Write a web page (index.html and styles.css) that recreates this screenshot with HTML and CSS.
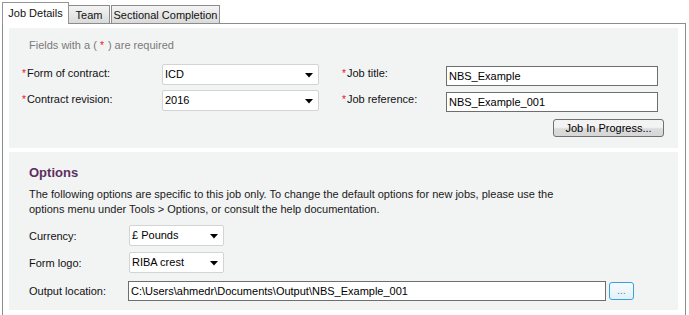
FILE: index.html
```html
<!DOCTYPE html>
<html lang="en">
<head>
  <meta charset="UTF-8">
  <title>Job Details</title>
  <link rel="stylesheet" href="styles.css">
</head>
<body>
  <div class="window">
    <div class="tabs">
      <div class="tab active">Job Details</div>
      <div class="tab team">Team</div>
      <div class="tab sectional">Sectional Completion</div>
    </div>

    <div class="panel">
      <div class="section details">
        <p class="note">Fields with a ( <span class="req">*</span> ) are required</p>

        <div class="details-grid">
          <label class="field-label"><span class="req">*</span>Form of contract:</label>
          <div class="select wide">
            <span>ICD</span>
            <svg width="8" height="5" viewBox="0 0 8 5"><path d="M0 0h8L4 4.5z" fill="#000"/></svg>
          </div>
          <label class="field-label right"><span class="req">*</span>Job title:</label>
          <div class="text-input job">NBS_Example</div>

          <label class="field-label"><span class="req">*</span>Contract revision:</label>
          <div class="select wide">
            <span>2016</span>
            <svg width="8" height="5" viewBox="0 0 8 5"><path d="M0 0h8L4 4.5z" fill="#000"/></svg>
          </div>
          <label class="field-label right"><span class="req">*</span>Job reference:</label>
          <div class="text-input job">NBS_Example_001</div>
        </div>

        <div class="actions">
          <button class="btn progress">Job In Progress...</button>
        </div>
      </div>

      <div class="section options">
        <h3>Options</h3>
        <p class="description">
          The following options are specific to this job only. To change the default options for new jobs, please use the<br>
          options menu under Tools &gt; Options, or consult the help documentation.
        </p>

        <div class="option-row">
          <label>Currency:</label>
          <div class="select small">
            <span>£ Pounds</span>
            <svg width="8" height="5" viewBox="0 0 8 5"><path d="M0 0h8L4 4.5z" fill="#000"/></svg>
          </div>
        </div>

        <div class="option-row">
          <label>Form logo:</label>
          <div class="select small">
            <span>RIBA crest</span>
            <svg width="8" height="5" viewBox="0 0 8 5"><path d="M0 0h8L4 4.5z" fill="#000"/></svg>
          </div>
        </div>

        <div class="option-row output">
          <label>Output location:</label>
          <div class="text-input path">C:\Users\ahmedr\Documents\Output\NBS_Example_001</div>
          <button class="btn browse">...</button>
        </div>
      </div>
    </div>
  </div>
</body>
</html>
```

FILE: styles.css
```css
body {
  margin: 0;
  background: #fff;
  font-family: 'Liberation Sans', Arial, sans-serif;
  font-size: 11px;
  color: #111;
}
.window {
  padding: 2px 0 0 2px;
}
.tabs {
  display: flex;
  align-items: flex-end;
  height: 21px;
}
.tab {
  box-sizing: border-box;
  height: 18px;
  border: 1px solid #8c8c8c;
  border-bottom: none;
  background: linear-gradient(#f4f4f4, #dadada);
  padding-top: 3px;
  text-align: center;
  line-height: 13px;
  white-space: nowrap;
}
.tab.active {
  height: 22px;
  width: 67px;
  margin-bottom: -1px;
  background: #fff;
  border-color: #959595;
  padding-top: 4px;
  position: relative;
  z-index: 1;
}
.tab.team {
  width: 41px;
  border-left: none;
}
.tab.sectional {
  width: 109px;
  margin-left: 1px;
}
.panel {
  box-sizing: border-box;
  width: 684px;
  height: 293px;
  border: 1px solid #8c8c8c;
  padding: 4px 7px 0 6px;
}
.section {
  background: #f2f3f3;
}
.details {
  height: 120px;
  box-sizing: border-box;
  padding: 11px 14px 0 13px;
}
.note {
  margin: 0 0 12px 7px;
  color: #7a7a7a;
  line-height: 13px;
}
.req {
  color: #e8102a;
  font-size: 10px;
  margin-right: 1px;
}
.details-grid {
  display: grid;
  grid-template-columns: 140px 157px 127px 212px;
  grid-auto-rows: 21px;
  row-gap: 5px;
}
.field-label {
  line-height: 19px;
}
.field-label.right {
  padding-left: 23px;
  line-height: 18px;
}
.select {
  box-sizing: border-box;
  height: 21px;
  border: 1px solid #d3d3d3;
  border-radius: 2px;
  background: #fff;
  display: flex;
  align-items: center;
  justify-content: space-between;
  padding: 0 5px 1px 2px;
  color: #000;
}
.select svg {
  margin-top: 2px;
}
.text-input {
  box-sizing: border-box;
  height: 20px;
  border: 1px solid #6e6e6e;
  background: #fff;
  padding: 0 2px;
  line-height: 18px;
  color: #000;
  white-space: nowrap;
}
.text-input.job {
  margin-top: 2px;
}
.actions {
  display: flex;
  justify-content: flex-end;
  margin-top: 8px;
}
.btn {
  font-family: inherit;
  font-size: 11px;
  color: #000;
  border: 1px solid #707070;
  border-radius: 3px;
  background: linear-gradient(#f3f3f3 45%, #dcdcdc 55%, #d6d6d6);
  padding: 0;
  cursor: pointer;
}
.btn.progress {
  width: 111px;
  height: 18px;
}
.options {
  margin-top: 4px;
  height: 158px;
  box-sizing: border-box;
  padding: 13px 20px 0 20px;
}
.options h3 {
  margin: 0;
  font-size: 13px;
  line-height: 15px;
  color: #5d2f5f;
}
.description {
  margin: 7px 0 8px;
  line-height: 15px;
  color: #1a1a1a;
}
.option-row {
  display: flex;
  align-items: center;
  margin-bottom: 6px;
}
.option-row label {
  width: 100px;
}
.select.small {
  width: 95px;
}
.option-row.output {
  margin-top: 8px;
}
.output label {
  width: 99px;
}
.text-input.path {
  width: 478px;
}
.btn.browse {
  width: 25px;
  height: 18px;
  margin-left: 3px;
  border: 1px solid #3aa0dc;
  background: linear-gradient(#f5fbfe, #e3f1fa);
  color: #777;
  font-size: 10px;
  line-height: 10px;
}
```
